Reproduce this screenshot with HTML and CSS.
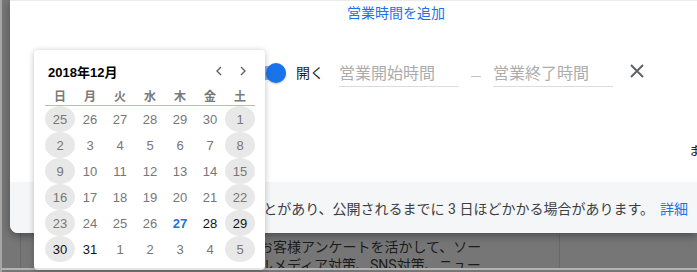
FILE: index.html
```html
<!DOCTYPE html>
<html lang="ja">
<head>
  <meta charset="UTF-8">
  <meta name="viewport" content="width=device-width, initial-scale=1.0">
  <title>営業時間</title>
  <link rel="stylesheet" href="styles.css">
</head>
<body>

  <div class="screen">
    <!-- Business hours dialog -->
    <div class="dialog">
      <div class="hours">
        <a class="add-hours" href="#">営業時間を追加</a>
        <div class="hours-row">
          <span class="switch"></span>
          <span class="open-label">開く</span>
          <input class="time-input" type="text" placeholder="営業開始時間">
          <span class="time-sep"></span>
          <input class="time-input" type="text" placeholder="営業終了時間">
          <svg class="remove-icon" width="14" height="14" viewBox="0 0 14 14">
            <path d="M1 1 L13 13 M13 1 L1 13" stroke="#5f6368" stroke-width="2" fill="none"/>
          </svg>
        </div>
      </div>
      <div class="side-note">ま</div>
      <div class="dialog-footer">
        <span>編集内容は審査されることがあり、公開されるまでに 3 日ほどかかる場合があります。</span>
        <a class="footer-link" href="#">詳細</a>
      </div>
    </div>

    <!-- Page behind the dialog -->
    <div class="page-body">
      <div class="col-gutter"></div>
      <div class="col-main">
        <p>めたお客様アンケートを活かして、ソー</p>
        <p>シャルメディア対策、SNS対策、ニュー</p>
      </div>
    </div>
    <div class="page-rule"></div>
  </div>

  <!-- Date picker popup -->
  <div class="datepicker">
    <div class="cal-header">
      <span class="cal-title">2018年12月</span>
      <div class="cal-nav">
        <button class="cal-btn">
          <svg width="6" height="10" viewBox="0 0 6 10"><path d="M5 1 L1 5 L5 9" stroke="#5f6368" stroke-width="1.4" fill="none"/></svg>
        </button>
        <button class="cal-btn">
          <svg width="6" height="10" viewBox="0 0 6 10"><path d="M1 1 L5 5 L1 9" stroke="#5f6368" stroke-width="1.4" fill="none"/></svg>
        </button>
      </div>
    </div>
    <div class="cal-weekdays">
      <span>日</span><span>月</span><span>火</span><span>水</span><span>木</span><span>金</span><span>土</span>
    </div>
    <div class="cal-grid" id="calGrid"></div>
  </div>

  <script>
    const calGrid = document.getElementById('calGrid');

    // Six weeks starting from Sunday, Nov 25 2018
    for (let i = 0; i < 42; i++) {
      const d = new Date(2018, 10, 25 + i);
      const cell = document.createElement('span');
      cell.className = 'cal-day';
      if (i % 7 === 0 || i % 7 === 6) cell.classList.add('weekend');
      const inMonth = d.getMonth() === 11;
      if (inMonth && d.getDate() === 27) cell.classList.add('today');
      else if (inMonth && d.getDate() > 27) cell.classList.add('active');
      cell.textContent = d.getDate();
      calGrid.appendChild(cell);
    }
  </script>

</body>
</html>
```

FILE: styles.css
```css
body {
  margin: 0;
  font-family: Roboto, "Noto Sans CJK JP", sans-serif;
  color: #202124;
}
.screen {
  width: 695px;
  height: 272px;
  overflow: hidden;
  border-left: 2px solid #a6a6a6;
  background: #767676;
}
.dialog {
  position: relative;
  z-index: 1;
  margin-left: 8px;
  height: 233px;
  box-sizing: border-box;
  border-top: 1px solid #ebebeb;
  background: #fff;
  border-bottom-left-radius: 8px;
  box-shadow: 0 3px 8px rgba(0, 0, 0, 0.35);
  display: flex;
  flex-direction: column;
  overflow: hidden;
}
.hours {
  margin-left: 242px;
}
.add-hours {
  display: block;
  width: fit-content;
  margin-left: 95px;
  padding-top: 2px;
  font-size: 14px;
  line-height: 20px;
  color: #1a73e8;
  text-decoration: none;
}
.hours-row {
  display: flex;
  align-items: center;
  height: 29px;
  margin-top: 35px;
}
.switch {
  position: relative;
  flex: none;
  width: 34px;
  height: 14px;
  border-radius: 7px;
  background: #8ab4f8;
}
.switch::after {
  content: "";
  position: absolute;
  right: 0;
  top: -3px;
  width: 20px;
  height: 20px;
  border-radius: 50%;
  background: #1a73e8;
  box-shadow: 0 1px 2px rgba(0, 0, 0, 0.25);
}
.open-label {
  margin-left: 10px;
  margin-right: 15px;
  font-size: 14px;
  line-height: 20px;
}
.time-input {
  width: 120px;
  height: 28px;
  padding: 0;
  border: none;
  border-bottom: 1px solid #dadce0;
  font-family: "Noto Sans CJK JP", sans-serif;
  font-size: 16px;
  outline: none;
}
.time-input::placeholder {
  color: #acacac;
}
.time-sep {
  align-self: stretch;
  width: 34px;
  box-sizing: border-box;
  padding-bottom: 10px;
  display: flex;
  justify-content: center;
  align-items: flex-end;
}
.time-sep::before {
  content: "";
  width: 10px;
  height: 1px;
  background: #c4c4c4;
}
.remove-icon {
  margin-left: 17px;
  margin-bottom: 3px;
}
.side-note {
  margin-top: 54px;
  padding-left: 679px;
  font-size: 13px;
  line-height: 20px;
  white-space: nowrap;
}
.dialog-footer {
  margin-top: auto;
  height: 51px;
  flex: none;
  display: flex;
  align-items: center;
  justify-content: flex-end;
  gap: 6px;
  padding-right: 9px;
  background: #f5f6f7;
  font-size: 14px;
  color: #3c4043;
  white-space: nowrap;
}
.footer-link {
  color: #1a73e8;
  text-decoration: none;
}
.page-body {
  display: flex;
  height: 35px;
  overflow: hidden;
}
.col-gutter {
  width: 18px;
  border-right: 1px solid #686868;
}
.col-main {
  width: 328px;
  padding: 5px 0 0 210px;
  border-right: 1px solid #686868;
}
.col-main p {
  margin: 0;
  font-size: 14px;
  line-height: 18px;
  color: #1c1c1c;
  white-space: nowrap;
}
.page-rule {
  height: 2px;
  background: #b3b3b3;
}
.datepicker {
  position: absolute;
  z-index: 2;
  left: 34px;
  top: 50px;
  width: 231px;
  height: 220px;
  box-sizing: border-box;
  padding: 11px 10px 0 11px;
  background: #fff;
  border-radius: 4px;
  border-bottom: 2px solid #e4e4e4;
  box-shadow: 0 1px 6px rgba(0, 0, 0, 0.25);
  font-family: "Liberation Sans", "Noto Sans CJK JP", sans-serif;
}
.cal-header {
  display: flex;
  align-items: center;
  justify-content: space-between;
  height: 20px;
  padding-left: 3px;
}
.cal-title {
  font-size: 13px;
  font-weight: bold;
  color: #000;
}
.cal-nav {
  display: flex;
}
.cal-btn {
  width: 24px;
  height: 20px;
  padding: 0;
  border: none;
  background: none;
  display: flex;
  align-items: center;
  justify-content: center;
}
.cal-weekdays {
  display: grid;
  grid-template-columns: repeat(7, 30px);
  padding-top: 6px;
  line-height: 18px;
  border-bottom: 1px solid #a8bde0;
  font-family: "Noto Sans CJK JP", sans-serif;
  font-size: 12px;
  font-weight: bold;
  color: #7a7a7a;
  text-align: center;
}
.cal-grid {
  display: grid;
  grid-template-columns: repeat(7, 30px);
  grid-auto-rows: 26px;
}
.cal-day {
  display: flex;
  align-items: center;
  justify-content: center;
  border-radius: 50%;
  font-size: 13px;
  color: #777;
}
.cal-day.weekend {
  background: #e8e8e8;
}
.cal-day.active {
  color: #111;
}
.cal-day.today {
  color: #1a73e8;
  font-weight: bold;
}
```
